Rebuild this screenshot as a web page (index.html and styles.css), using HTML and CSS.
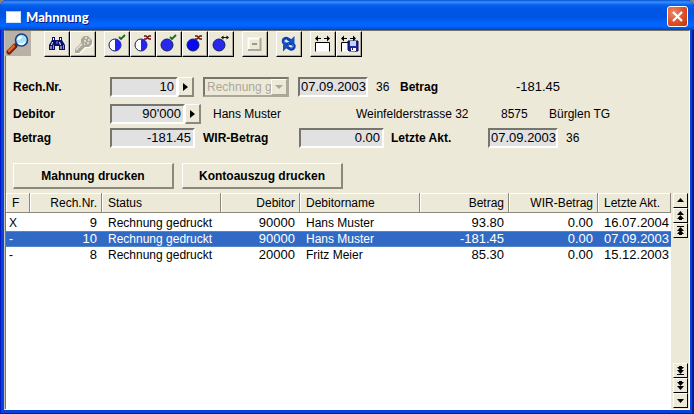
FILE: index.html
```html
<!DOCTYPE html>
<html lang="de">
<head>
<meta charset="utf-8">
<title>Mahnnung</title>
<link rel="stylesheet" href="styles.css">
</head>
<body>
<main class="window">
  <header class="titlebar">
    <span class="app-icon"></span>
    <h1 class="title">Mahnnung</h1>
    <button class="close" aria-label="Schliessen"><svg width="13" height="13" viewBox="0 0 13 13"><path d="M2 2l9 9M11 2l-9 9" stroke="#fff" stroke-width="2.2"/></svg></button>
  </header>
  <div class="client">
    <div class="toolbar">
      <button class="tool pressed" aria-label="Suchen"><svg viewBox="0 0 24 24"><path d="M3 20l6-6" stroke="#702010" stroke-width="5" stroke-linecap="round"/><path d="M3 19l6-6" stroke="#e86020" stroke-width="2.5" stroke-linecap="round"/><path d="M9 14l3-3" stroke="#203050" stroke-width="2.5"/><circle cx="15.500" cy="8" r="6" fill="#a5e3fa" stroke="#183e85" stroke-width="1.600"/><path d="M11 8q1-4 5-4q-1 4-5 4" fill="#fff"/><path d="M12 11q4 3 7-1" fill="none" stroke="#e9fcff" stroke-width="2"/></svg></button>
      <span class="gap-l"></span>
      <button class="tool" aria-label="Fernglas"><svg viewBox="0 0 24 24"><path d="M7 5h3v3h4V5h3v3l3 5v5h-6v-4h-4v4H4v-5l3-5z" fill="#08106c"/><path d="M8.500 6v2M15.500 6v2M7.500 10l-1 3M14.500 10l1 3M6 14v3M16 14v3" stroke="#fff" stroke-width="1"/><path d="M8.500 13v4M18.500 13v4M12 9v3" stroke="#7895df"/></svg></button>
      <button class="tool" aria-label="Schlüssel" disabled><svg viewBox="0 0 24 24"><g transform="translate(1 1)" fill="#fff"><path d="M13 4h4l4 4v4l-3 3h-4l-6 6H4v-4l6-6V7z"/></g><path d="M13 4h4l4 4v4l-3 3h-4l-6 6H4v-4l6-6V7z" fill="#aca899"/><path d="M5 18l6-6M14 6h2M17 8h2M13 9h2M16 11h2M13 12h1" stroke="#ece9d8" stroke-width="1.400"/></svg></button>
      <span class="gap-s"></span>
      <button class="tool" aria-label="Halb bestätigen"><svg viewBox="0 0 24 24"><circle cx="10" cy="13" r="6" fill="#fff" stroke="#111b65"/><path d="M10 7a6 6 0 010 12z" fill="#2525ef"/><path d="M14 5l2 2 4-4" fill="none" stroke="#176b18" stroke-width="1.800"/></svg></button>
      <button class="tool" aria-label="Halb aufheben"><svg viewBox="0 0 24 24"><circle cx="10" cy="13" r="6" fill="#fff" stroke="#111b65"/><path d="M10 7a6 6 0 010 12z" fill="#2525ef"/><path d="M13 4h2l3 3h2M13 7h2l3-3h2" fill="none" stroke="#701010" stroke-width="1.500"/></svg></button>
      <button class="tool" aria-label="Bestätigen"><svg viewBox="0 0 24 24"><circle cx="10" cy="13" r="6" fill="#2929ec" stroke="#15206b"/><path d="M13 5l2 2 4-4" fill="none" stroke="#176b18" stroke-width="1.800"/></svg></button>
      <button class="tool" aria-label="Aufheben"><svg viewBox="0 0 24 24"><circle cx="10" cy="13" r="6" fill="#0808f4" stroke="#15206b"/><path d="M12 4h2l3 3h2M12 7h2l3-3h2" fill="none" stroke="#701010" stroke-width="1.500"/></svg></button>
      <button class="tool" aria-label="Umkehren"><svg viewBox="0 0 24 24"><circle cx="10" cy="13" r="6" fill="#2929ec" stroke="#15206b"/><path d="M12 5.500l2.500-2v4zM20 5.500l-2.500-2v4z"/><path d="M13 5.500h6" stroke="#111"/></svg></button>
      <span class="gap-s"></span>
      <button class="tool" aria-label="Reduzieren" disabled><svg viewBox="0 0 24 24"><path d="M5.500 18V6.500H17" fill="none" stroke="#fff" stroke-width="2"/><path d="M5 18h12.500V6" fill="none" stroke="#aca899" stroke-width="2"/><path d="M9 12h5" stroke="#9c988a" stroke-width="2"/></svg></button>
      <span class="gap-s"></span>
      <button class="tool" aria-label="Aktualisieren"><svg viewBox="0 0 24 24"><g fill="none" stroke="#0a3fae" stroke-width="3"><path d="M11.500 12H9C4.500 11 6 5.500 10 6.500L14.500 9"/><path d="M11.500 11.500H14c5 1 3.500 6.500-.5 5.500L9 14.500"/></g><path d="M17.500 4v7h-7zM6 19.500v-7h7z" fill="#1650c4"/><g fill="none" stroke="#4c91ec"><path d="M8.500 11.500C6 10.500 7 7 10 7.500"/><path d="M15 12c2.500 1 1.500 4.500-1.500 4"/></g></svg></button>
      <span class="gap-s"></span>
      <button class="tool" aria-label="Breite anpassen"><svg viewBox="0 0 24 24"><path d="M4.500 19.500v-9h14v9" fill="#fff" stroke="#000"/><path d="M5 6.500h5M13 6.500h5" stroke="#000"/><path d="M4 6.500l3-3v6zM19 6.500l-3-3v6z"/></svg></button>
      <button class="tool" aria-label="Breite speichern"><svg viewBox="0 0 24 24"><path d="M4.500 19.500v-9h14v9" fill="#fff" stroke="#000"/><path d="M5 6.500h5M13 6.500h5" stroke="#000"/><path d="M4 6.500l3-3v6zM19 6.500l-3-3v6z"/><path d="M11 9h10v10H12l-1-1z" fill="#24249a" stroke="#090953"/><path d="M13 9h6v5h-6z" fill="#bfd6fa"/><path d="M14 16h5v3h-5z" fill="#fff"/><path d="M15 16h1v2h-1z" fill="#222288"/></svg></button>
    </div>

    <form class="details">
      <div class="row">
        <label class="name" for="nr">Rech.Nr.</label>
        <input class="field num w-nr" id="nr" value="10" readonly>
        <button type="button" class="pick" aria-label="Rechnung wählen"><svg width="5" height="8" viewBox="0 0 5 8"><path d="M0 0l5 4-5 4z"/></svg></button>
        <span class="combo"><select aria-label="Status" disabled><option>Rechnung gedruckt</option></select><span class="combo-arrow"><svg width="8" height="4" viewBox="0 0 8 4"><path d="M0 0h8L4 4z" fill="#aca899"/></svg></span></span>
        <input class="field date" aria-label="Rechnungsdatum" value="07.09.2003" readonly>
        <span class="days">36</span>
        <b>Betrag</b>
        <span class="amount">-181.45</span>
      </div>
      <div class="row row-debtor">
        <label class="name" for="deb">Debitor</label>
        <input class="field num w-deb" id="deb" value="90'000" readonly>
        <button type="button" class="pick" aria-label="Debitor wählen"><svg width="5" height="8" viewBox="0 0 5 8"><path d="M0 0l5 4-5 4z"/></svg></button>
        <span class="person">Hans Muster</span>
        <span class="street">Weinfelderstrasse 32</span>
        <span class="zip">8575</span>
        <span>Bürglen TG</span>
      </div>
      <div class="row">
        <label class="name" for="sum">Betrag</label>
        <input class="field num w-sum" id="sum" value="-181.45" readonly>
        <label class="wir" for="wir">WIR-Betrag</label>
        <input class="field num w-sum" id="wir" value="0.00" readonly>
        <label class="last" for="akt">Letzte Akt.</label>
        <input class="field date" id="akt" value="07.09.2003" readonly>
        <span class="days">36</span>
      </div>
      <div class="actions">
        <button type="button" class="push">Mahnung drucken</button>
        <button type="button" class="push">Kontoauszug drucken</button>
      </div>
    </form>

    <div class="list">
      <div class="sheet">
        <table>
          <colgroup><col class="c-f"><col class="c-nr"><col class="c-status"><col class="c-deb"><col><col class="c-sum"><col class="c-sum"><col class="c-date"></colgroup>
          <thead><tr><th>F</th><th class="r">Rech.Nr.</th><th>Status</th><th class="r">Debitor</th><th>Debitorname</th><th class="r">Betrag</th><th class="r">WIR-Betrag</th><th>Letzte Akt.</th></tr></thead>
          <tbody>
            <tr><td>X</td><td class="r">9</td><td>Rechnung gedruckt</td><td class="r">90000</td><td>Hans Muster</td><td class="r">93.80</td><td class="r">0.00</td><td class="d">16.07.2004</td></tr>
            <tr class="selected"><td>-</td><td class="r">10</td><td>Rechnung gedruckt</td><td class="r">90000</td><td>Hans Muster</td><td class="r">-181.45</td><td class="r">0.00</td><td class="d">07.09.2003</td></tr>
            <tr><td>-</td><td class="r">8</td><td>Rechnung gedruckt</td><td class="r">20000</td><td>Fritz Meier</td><td class="r">85.30</td><td class="r">0.00</td><td class="d">15.12.2003</td></tr>
          </tbody>
        </table>
      </div>
      <div class="scroller">
        <button class="step" aria-label="Zeile hoch"><svg viewBox="0 0 11 11"><path d="M2 7h7L5.500 3z"/></svg></button>
        <button class="step" aria-label="Seite hoch"><svg viewBox="0 0 11 11"><path d="M2 5h7L5.500 1zM2 9h7L5.500 5zM4 9h3v1H4z"/></svg></button>
        <button class="step" aria-label="Anfang"><svg viewBox="0 0 11 11"><path d="M2 1h7v1H2zM2 6h7L5.500 2zM2 9h7L5.500 5zM4 9h3v1H4z"/></svg></button>
        <span class="track"></span>
        <button class="step" aria-label="Ende"><svg viewBox="0 0 11 11"><path d="M4 1h3v1H4zM2 2h7L5.500 6zM2 5h7L5.500 9zM2 9h7v1H2z"/></svg></button>
        <button class="step" aria-label="Seite runter"><svg viewBox="0 0 11 11"><path d="M4 1h3v1H4zM2 2h7L5.500 6zM2 6h7L5.500 10z"/></svg></button>
        <button class="step" aria-label="Zeile runter"><svg viewBox="0 0 11 11"><path d="M2 4h7L5.500 8z"/></svg></button>
      </div>
    </div>
  </div>
</main>
</body>
</html>
```
FILE: styles.css
```css
* { box-sizing: border-box; }

body {
  margin: 0;
  background: #8d8577;
  color: #000;
  font: 12px/16px "Liberation Sans", Arial, sans-serif;
}

button, input, select { font: inherit; color: inherit; margin: 0; padding: 0; border-radius: 0; }
button { display: flex; align-items: center; justify-content: center; flex: none; }
svg { display: block; }

.window {
  display: flex;
  flex-direction: column;
  height: 100vh;
  padding: 0 4px 4px;
  background: #0842d8;
  border-radius: 7px 7px 0 0;
  box-shadow: inset 1px 0 #0019c8, inset -2px -1px #001ea0;
  overflow: hidden;
}

.titlebar {
  display: flex;
  align-items: center;
  height: 30px;
  flex: none;
  margin: 0 -4px;
  padding: 3px 6px 0;
  background: linear-gradient(#0850d0 0, #3a8efc 2px, #0660ee 5px, #0054e3 9px, #0055e5 17px, #0264fc 23px, #0364ff 26px, #0050d8 29px, #003fb8 30px);
}
.app-icon { width: 15px; height: 12px; background: #fff; border: 1px solid #d4e4ff; border-top-color: #a6c4f5; }
.title {
  flex: 1;
  margin: 0 0 0 5px;
  color: #fff;
  font: 900 13px/18px Lato, "Open Sans", sans-serif;
  text-shadow: 1px 1px #0a1883;
}
.close {
  width: 21px;
  height: 21px;
  border: 1px solid #fff;
  border-radius: 3px;
  background: radial-gradient(circle at 30% 30%, #ee8867, #dc4a22 60%, #b93510);
}

.client {
  display: flex;
  flex-direction: column;
  flex: 1;
  min-height: 0;
  background: #ece9d8;
  border: 1px solid #fff;
  border-top-color: #737267;
  border-left-color: #c8c5b8;
  box-shadow: inset 1px 0 #77756c;
}

.toolbar { display: flex; flex: none; height: 26px; }
.tool {
  width: 26px;
  height: 26px;
  background: #ece9d8;
  border: 1px solid #fff;
  border-right-color: #000;
  border-bottom-color: #000;
  box-shadow: inset -1px -1px #aca899;
}
.tool svg { width: 24px; height: 24px; }
.tool.pressed { height: 25px; background: #b8b1a8; border-color: #b8b1a8; box-shadow: none; }
.gap-l { width: 13px; }
.gap-s { width: 8px; }

.details { padding: 20px 8px 0; flex: none; }
.row { display: flex; align-items: center; height: 20px; white-space: nowrap; }
.row-debtor { margin: 7px 0 4px; }
.name, .wir, .last, .row b, .push { font-weight: bold; }
.name { width: 97px; }

.field, .amount, td.r, td.d { font-size: 13px; }
.field {
  height: 20px;
  padding: 0 2px 2px;
  background: #e2e1e1;
  border: 2px solid;
  border-color: #77756c #fff #fff #77756c;
  outline: 0;
}
.num { text-align: right; }
.w-nr { width: 68px; }
.w-deb { width: 75px; }
.w-sum { width: 85px; }
.date { width: 70px; padding: 0 0 2px 1px; }

.pick {
  width: 16px;
  height: 20px;
  background: #ece9d8;
  border: 1px solid #fff;
  border-right: 2px solid #8c897c;
  border-bottom: 2px solid #8c897c;
}

.combo { position: relative; width: 86px; height: 20px; margin: 0 9px; }
.combo select {
  width: 100%;
  height: 100%;
  padding: 0 16px 0 2px;
  appearance: none;
  color: #aca899;
  opacity: 1;
  background: #ece9d8;
  border: 2px solid;
  border-color: #77756c #aca899 #aca899 #77756c;
}
.combo-arrow {
  position: absolute;
  top: 2px;
  right: 2px;
  bottom: 2px;
  display: flex;
  align-items: center;
  justify-content: center;
  width: 16px;
  background: #ece9d8;
  border: 1px solid #fff;
  border-right-color: #aca899;
  border-bottom-color: #aca899;
  pointer-events: none;
}

.days { flex: none; width: 32px; padding-left: 8px; }
.row b { width: 80px; }
.amount { width: 80px; text-align: right; }
.person { width: 155px; padding-left: 12px; }
.street { width: 145px; }
.zip { width: 48px; }
.wir { width: 104px; padding-left: 8px; }
.last { width: 104px; padding-left: 7px; }

.actions { display: flex; gap: 8px; margin: 15px 0 4px; }
.push {
  width: 161px;
  height: 26px;
  background: #ece9d8;
  border: 1px solid #fff;
  border-right: 2px solid #8c897c;
  border-bottom: 2px solid #8c897c;
}

.list { display: flex; flex: 1; min-height: 0; padding-left: 1px; }
.sheet { flex: 1; background: #fff; }
table { width: 100%; table-layout: fixed; border-spacing: 0; }
.c-f { width: 24px; }
.c-nr { width: 72px; }
.c-status { width: 119px; }
.c-deb { width: 79px; }
.c-sum { width: 89px; }
.c-date { width: 73px; }

th, td { padding: 0 5px 0 6px; text-align: left; white-space: nowrap; font-weight: normal; }
th {
  height: 22px;
  background: #ece9d8 padding-box;
  border-bottom: 2px solid #fff;
  box-shadow: inset -1px -1px #8c897c, inset 1px 1px #fff;
}
td { height: 16px; line-height: 16px; }
td:first-child { padding-left: 3px; }
th.r, td.r { text-align: right; }
.selected td {
  color: #fff;
  background: #316ac5;
  box-shadow: inset 0 1px #5485c8, inset 0 -1px #5485c8;
}

.scroller { display: flex; flex-direction: column; width: 18px; padding: 0 1px 1px 2px; }
.step {
  width: 15px;
  height: 15px;
  background: #ece9d8;
  border: 1px solid #fff;
  border-right-color: #000;
  border-bottom-color: #000;
}
.step svg { width: 11px; height: 11px; }
.track { flex: 1; }
```
